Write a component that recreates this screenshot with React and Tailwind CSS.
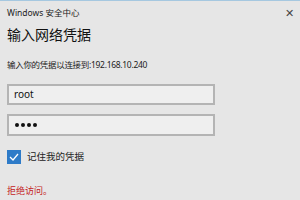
import React from "react";

const font = { fontFamily: '"Noto Sans", "Noto Sans CJK SC", sans-serif' };

const App = () => {
  return (
    <div
      className="w-[300px] h-[200px] bg-[#e6e6e6] border-t border-[#a6c8e0] overflow-hidden relative text-[#1a1a1a]"
      style={font}
    >
      <div className="flex items-center justify-between pl-[7px] pr-[6px] h-[24px]">
        <span className="text-[8.5px] leading-none text-[#222]">Windows 安全中心</span>
        <span className="text-[11px] leading-none text-[#444] mt-[-2px]">✕</span>
      </div>
      <div className="pl-[7px]">
        <h1 className="text-[14px] leading-none mt-[3px] text-[#111]">输入网络凭据</h1>
        <p className="text-[8.5px] leading-none mt-[19px] tracking-[-0.3px] text-[#222]">
          输入你的凭据以连接到:192.168.10.240
        </p>
        <div className="mt-[14px] w-[208px] h-[21px] border-2 border-[#b4b4b4] bg-[#efefef] flex items-center pl-[5px] text-[10px] text-[#111]">
          root
        </div>
        <div className="mt-[9px] w-[208px] h-[22px] border-2 border-[#b4b4b4] bg-[#efefef] flex items-center gap-[2px] pl-[6px]">
          <span className="w-[4px] h-[4px] rounded-full bg-[#111]" />
          <span className="w-[4px] h-[4px] rounded-full bg-[#111]" />
          <span className="w-[4px] h-[4px] rounded-full bg-[#111]" />
          <span className="w-[4px] h-[4px] rounded-full bg-[#111]" />
        </div>
        <div className="mt-[14px] flex items-center gap-[6px]">
          <div className="w-[14px] h-[14px] bg-[#2e7bc8] flex items-center justify-center">
            <svg width="10" height="8" viewBox="0 0 10 8">
              <path d="M1 4 L4 7 L9 1" fill="none" stroke="#ffffff" strokeWidth="1.3" />
            </svg>
          </div>
          <span className="text-[9.5px] leading-none text-[#222]">记住我的凭据</span>
        </div>
        <p className="text-[9px] leading-none mt-[22px] text-[#c41a1a]">拒绝访问。</p>
      </div>
    </div>
  );
};

export default App;
